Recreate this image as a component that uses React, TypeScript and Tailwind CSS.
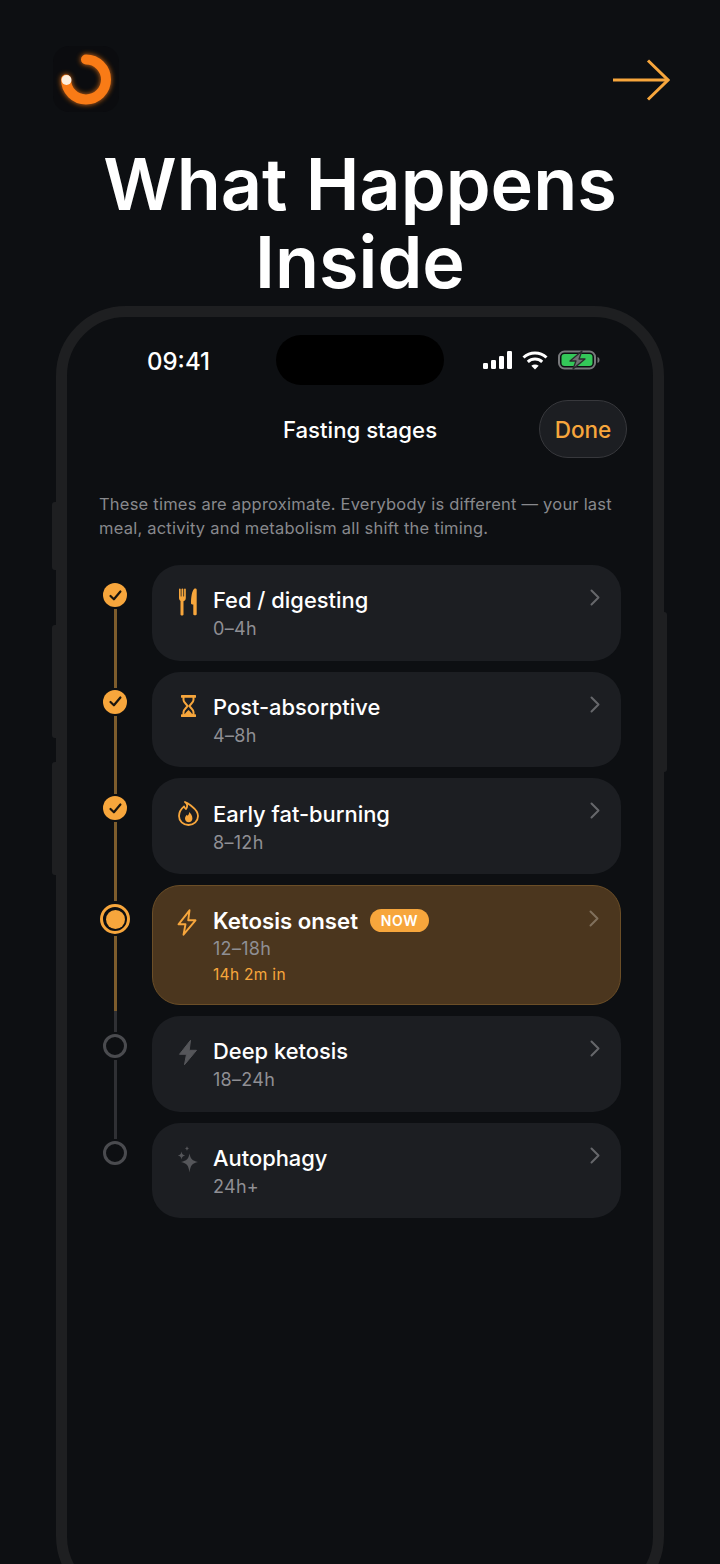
import React from "react";

const O = "#f7a63c";

function Check() {
  return (
    <div className="w-6 h-6 rounded-full bg-[#f7a63c] flex items-center justify-center shrink-0">
      <svg width="15" height="15" viewBox="0 0 15 15" fill="none">
        <path d="M2.500 8 5.900 11.300 12.400 3.500" stroke="#1a150e" strokeWidth="2.200" strokeLinecap="round" strokeLinejoin="round" />
      </svg>
    </div>
  );
}
function Current() {
  return (
    <div className="w-[30px] h-[30px] rounded-full border-[3px] border-[#f7a63c] flex items-center justify-center shrink-0 bg-[#0d0f12]">
      <div className="w-[19px] h-[19px] rounded-full bg-[#f7a63c]" />
    </div>
  );
}
function Empty() {
  return <div className="w-6 h-6 rounded-full border-[3px] border-[#4a4b4f] shrink-0" />;
}

function Fork() {
  return (
    <svg width="18" height="28" viewBox="0 0 18 28" fill={O}>
      <path d="M0 1.200C0 .4 1.700.4 1.700 1.200v7c0 .5.8.5.8 0v-7c0-.8 1.800-.8 1.800 0v7c0 .5.8.5.8 0v-7c0-.8 1.700-.8 1.700 0v8.800c0 1.800-1 2.800-2.300 3.300v13.100c0 1.400-3 1.400-3 0V13C1 12.500 0 11.500 0 10z" />
      <path d="M15 1c1-.8 2.700-.4 2.700.8v24.400c0 1.400-3.400 1.400-3.400 0V16.500h-1.100c-.7 0-1.200-.5-1.200-1.200C12 9.800 12.800 3.200 15 1z" />
    </svg>
  );
}
function Hourglass() {
  return (
    <svg width="15" height="22" viewBox="0 0 15 22" fill="none">
      <path d="M1 1.400h13M1 20.600h13" stroke={O} strokeWidth="2.800" strokeLinecap="round" />
      <path d="M2.500 2v3c0 2.400 3 4 4 6-1 2-4 3.600-4 6v3h10v-3c0-2.400-3-4-4-6 1-2 4-3.600 4-6V2" stroke={O} strokeWidth="2" strokeLinejoin="round" />
      <path d="M3.600 20c.4-2 2.600-3.600 3.900-5 1.300 1.400 3.500 3 3.900 5z" fill={O} />
    </svg>
  );
}
function Flame() {
  return (
    <svg width="21" height="25" viewBox="0 0 21 25" fill="none">
      <path d="M7 1c2.800 1.800 2.600 4.600 1 7-1-.6-1.600-1.400-1.900-2.600C3.200 7.800 1 10.800 1 15c0 5 4 9 9.500 9s9.500-4 9.500-9c0-6-5-8.500-7.200-10.500C11 3 8.800 1.500 7 1z" stroke={O} strokeWidth="1.800" strokeLinejoin="round" />
      <path d="M11 11c.5 2-.8 2.800-1.200 3.800-.4-.3-.6-.6-.8-1.100-1.200 1-2 2.300-2 3.800 0 2.100 1.600 3.700 3.700 3.700s3.700-1.600 3.700-3.700c0-2.900-1.500-5.100-3.400-6.500z" fill={O} />
    </svg>
  );
}
function Zap({ filled }: { filled?: boolean }) {
  return (
    <svg width="20" height="27" viewBox="0 0 20 27" fill={filled ? "#55565a" : "none"}>
      <path d="M12.500 1.300 1.500 15.300h7L6.500 25.700l12-14.400h-7.300z" stroke={filled ? "#55565a" : O} strokeWidth={filled ? 1 : 1.900} strokeLinejoin="round" />
    </svg>
  );
}
function Sparkles() {
  return (
    <svg width="22" height="27" viewBox="0 0 22 27" fill="#55565a">
      <path d="M12.500 7.500c1 5.300 2.700 7.200 8.500 8.500-5.800 1.300-7.500 3.200-8.500 10.500-1-7.300-2.700-9.200-8.500-10.500 5.800-1.300 7.500-3.200 8.500-8.500z" />
      <path d="M4.500 5.500c.5 2.600 1.200 3.400 3.700 4-2.500.6-3.200 1.400-3.700 4-.5-2.600-1.200-3.400-3.700-4 2.500-.6 3.200-1.400 3.700-4z" />
      <path d="M10 0c.3 1.600.8 2.100 2.300 2.500-1.500.4-2 .9-2.300 2.500-.3-1.600-.8-2.100-2.300-2.500C9.200 2.100 9.700 1.600 10 0z" />
    </svg>
  );
}

type Stage = {
  title: string;
  range: string;
  icon: React.ReactNode;
  marker: "done" | "current" | "empty";
  top: string;
  bottom: string;
};

const stages: Stage[] = [
  { title: "Fed / digesting", range: "0–4h", icon: <Fork />, marker: "done", top: "", bottom: "bg-[#7d5c2c]" },
  { title: "Post-absorptive", range: "4–8h", icon: <Hourglass />, marker: "done", top: "bg-[#7d5c2c]", bottom: "bg-[#7d5c2c]" },
  { title: "Early fat-burning", range: "8–12h", icon: <Flame />, marker: "done", top: "bg-[#7d5c2c]", bottom: "bg-[#7d5c2c]" },
  { title: "Ketosis onset", range: "12–18h", icon: <Zap />, marker: "current", top: "bg-[#7d5c2c]", bottom: "bg-[#7d5c2c]" },
  { title: "Deep ketosis", range: "18–24h", icon: <Zap filled />, marker: "empty", top: "bg-[#2f3034]", bottom: "bg-[#2f3034]" },
  { title: "Autophagy", range: "24h+", icon: <Sparkles />, marker: "empty", top: "bg-[#2f3034]", bottom: "" },
];

function Row({ s }: { s: Stage }) {
  const current = s.marker === "current";
  return (
    <div className="flex">
      <div className="w-[52px] flex flex-col items-center ml-[-10px] mr-[11px]">
        <div className={`w-[3px] h-[16px] ${s.top}`} />
        <div className={current ? "h-[3px]" : "h-[2px]"} />
        {s.marker === "done" && <Check />}
        {s.marker === "current" && <Current />}
        {s.marker === "empty" && <Empty />}
        <div className="h-[2px]" />
        {current ? (
          <div className="w-[3px] flex-1 flex flex-col">
            <div className="h-[75px] bg-[#7d5c2c]" />
            <div className="flex-1 bg-[#2f3034]" />
          </div>
        ) : (
          <div className={`w-[3px] flex-1 ${s.bottom}`} />
        )}
      </div>
      <div className="pb-[11px] w-[469px]">
        <div
          className={
            current
              ? "relative h-[120px] rounded-[28px] border border-[#6b4e27] bg-[#4b361e] pl-[60px] pt-[21px]"
              : "relative h-[95.700px] rounded-[28px] bg-[#1c1e22] pl-[61px] pt-[22.400px]"
          }
        >
          <div className={`absolute w-[32px] flex justify-center ${current ? "top-[23px] left-[18px]" : "top-[23px] left-[20px]"}`}>{s.icon}</div>
          <div className="flex items-center gap-3 h-[27px]">
            <span className={`leading-[27px] text-white ${current ? "text-[22.200px] font-semibold" : "text-[21.900px] font-[550]"}`}>{s.title}</span>
            {current && (
              <span className="h-[23px] w-[59px] rounded-full bg-[#f7a63c] flex items-center justify-center text-[14px] font-semibold tracking-[0.6px] text-white">
                NOW
              </span>
            )}
          </div>
          <div className="mt-[4px] text-[18px] leading-[22px] tracking-[0.3px] text-[#8f8f94]">{s.range}</div>
          {current && <div className="mt-[5px] text-[15.500px] leading-[20px] tracking-[0.3px] text-[#f7a63c]">14h 2m in</div>}
          <svg className="absolute right-[20px] top-[24px]" width="12" height="17" viewBox="0 0 12 17" fill="none">
            <path d="M2.500 1.500 9.500 8.500 2.500 15.500" stroke={current ? "#80705c" : "#66676b"} strokeWidth="2" strokeLinecap="round" strokeLinejoin="round" />
          </svg>
        </div>
      </div>
    </div>
  );
}

export default function App() {
  return (
    <div
      className="relative w-[720px] h-[1564px] overflow-hidden bg-[#0d0f12] text-white"
      style={{ fontFamily: "Inter, 'Liberation Sans', sans-serif" }}
    >
      <div className="flex items-center justify-between pl-[53px] pr-[50px] pt-[46px]">
        <div className="w-[66px] h-[66px] rounded-[16px] bg-[#0b0c0f]">
          <svg width="66" height="66" viewBox="0 0 66 66" fill="none" className="overflow-visible">
            <defs>
              <filter id="glow" x="-40%" y="-40%" width="180%" height="180%">
                <feGaussianBlur stdDeviation="2.500" />
              </filter>
            </defs>
            <path d="M33 13.500a20 20 0 1 1-20 20" stroke="#f97b16" strokeWidth="11" strokeLinecap="round" filter="url(#glow)" opacity="0.75" />
            <path d="M33 13.500a20 20 0 1 1-20 20" stroke="#f97b16" strokeWidth="10" strokeLinecap="round" />
            <circle cx="13.500" cy="34" r="5" fill="#fdeedd" />
          </svg>
        </div>
        <svg className="mt-[2px]" width="57" height="42" viewBox="0 0 57 42" fill="none">
          <path d="M0 21h55" stroke={O} strokeWidth="3" />
          <path d="M35 1.500 55 21 35 40.500" stroke={O} strokeWidth="3" />
        </svg>
      </div>

      <h1 className="mt-[33px] text-center text-[72px] leading-[78px] font-semibold text-white">
        What Happens
        <br />
        Inside
      </h1>

      <div className="relative mx-auto mt-[5px] w-[608px] h-[1300px]">
        <div className="absolute left-[-4px] top-[196px] h-[68px] w-[6px] rounded-l-[3px] bg-[#1e1f21]" />
        <div className="absolute left-[-4px] top-[319px] h-[113px] w-[6px] rounded-l-[3px] bg-[#1e1f21]" />
        <div className="absolute left-[-4px] top-[456px] h-[113px] w-[6px] rounded-l-[3px] bg-[#1e1f21]" />
        <div className="absolute right-[-3px] top-[306px] h-[160px] w-[5px] rounded-r-[3px] bg-[#1e1f21]" />
        <div className="relative h-full rounded-[70px] border-[11px] border-[#1e1f21] bg-[#0d0f12]">
          <div className="flex items-center h-[50px] mt-[18px] pl-[80px]">
            <span className="w-[129px] pt-[4px] text-[24px] font-medium leading-none">09:41</span>
            <div className="w-[168px] h-[50px] rounded-full bg-black" />
            <div className="ml-[39px] flex items-center gap-[10px]">
              <svg width="29" height="18" viewBox="0 0 29 18" fill="#fff">
                <rect x="0" y="12" width="5" height="6" rx="1.200" />
                <rect x="8" y="9" width="5" height="9" rx="1.200" />
                <rect x="16" y="5" width="5" height="13" rx="1.200" />
                <rect x="24" y="0" width="5" height="18" rx="1.200" />
              </svg>
              <svg width="26" height="19" viewBox="0 0 26 19" fill="none" stroke="#fff" strokeWidth="3">
                <path d="M1.500 6.500c6.500-6 16.500-6 23 0" />
                <path d="M5.800 10.800c4.200-3.800 10.200-3.800 14.400 0" />
                <path d="M13 18.500 9.300 14.800c2.200-1.700 5.200-1.700 7.400 0z" fill="#fff" strokeWidth="0" />
              </svg>
              <svg width="42" height="20" viewBox="0 0 42 20">
                <rect x="1" y="1.500" width="36" height="17" rx="5.500" fill="none" stroke="#77787b" strokeWidth="2" />
                <rect x="3.500" y="4" width="31" height="12" rx="3" fill="#34c759" />
                <path d="M39.500 7v6c1.300-.4 2-1.500 2-3s-.7-2.600-2-3z" fill="#77787b" />
                <path d="M24 1 12 11h6l-3 8 12-10h-6z" fill="#707174" stroke="#2a2b2d" strokeWidth="1.300" strokeLinejoin="round" />
              </svg>
            </div>
          </div>

          <div className="relative flex items-center justify-center mt-[15px] h-[58px]">
            <span className="mt-[2px] text-[22.200px] font-medium">Fasting stages</span>
            <div className="absolute left-[472px] top-0 w-[88px] h-[58px] rounded-full border border-[#37383c] bg-[#1c1e22] flex items-center justify-center text-[22.500px] font-medium text-[#f7a63c]">
              <span className="mt-[2px]">Done</span>
            </div>
          </div>

          <p className="mt-[34px] ml-[32px] w-[530px] text-[16.500px] leading-[24px] tracking-[0.22px] text-[#88898d]">
            These times are approximate. Everybody is different — your last meal, activity and metabolism all shift the timing.
          </p>

          <div className="mt-[25px] ml-[32px]">
            {stages.map((s) => (
              <Row key={s.title} s={s} />
            ))}
          </div>
        </div>
      </div>
    </div>
  );
}
